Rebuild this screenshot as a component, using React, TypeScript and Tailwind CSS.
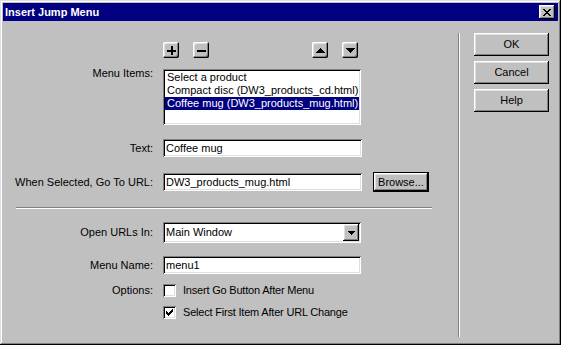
import React from "react";

const raised =
  "shadow-[inset_-1px_-1px_0_#000,inset_1px_1px_0_#fff,inset_-2px_-2px_0_#808080,inset_2px_2px_0_#dfdfdf]";
const sunken =
  "shadow-[inset_1px_1px_0_#808080,inset_-1px_-1px_0_#fff,inset_2px_2px_0_#000,inset_-2px_-2px_0_#dfdfdf]";

function SmallBtn({ children, className = "" }: { children: React.ReactNode; className?: string }) {
  return (
    <div
      className={`w-[16px] h-[16px] bg-[#c0c0c0] rounded-[2px] flex items-center justify-center ${raised} ${className}`}
    >
      {children}
    </div>
  );
}

function Check({ checked }: { checked?: boolean }) {
  const px: [number, number][] = [
    [0, 2], [0, 3], [0, 4], [1, 3], [1, 4], [1, 5], [2, 4], [2, 5], [2, 6],
    [3, 3], [3, 4], [3, 5], [4, 2], [4, 3], [4, 4], [5, 1], [5, 2], [5, 3],
    [6, 0], [6, 1], [6, 2],
  ];
  return (
    <div className={`w-[13px] h-[13px] bg-white flex items-center justify-center ${sunken}`}>
      {checked && (
        <svg width="7" height="7" viewBox="0 0 7 7" shapeRendering="crispEdges">
          {px.map(([x, y], i) => (
            <rect key={i} x={x} y={y} width="1" height="1" fill="#000" />
          ))}
        </svg>
      )}
    </div>
  );
}

export default function App() {
  const font = { fontFamily: '"Liberation Sans", Arial, sans-serif' };
  return (
    <div
      style={font}
      className="w-[561px] h-[345px] bg-[#c0c0c0] p-[3px] flex flex-col text-[11px] leading-[13px] text-black shadow-[inset_-1px_-1px_0_#000,inset_1px_1px_0_#dfdfdf,inset_-2px_-2px_0_#808080,inset_2px_2px_0_#fff]"
    >
      {/* Title bar */}
      <div className="h-[18px] bg-[#000080] flex items-center justify-between pl-[2px] pr-[3px]">
        <span className="text-white font-bold text-[11px]">Insert Jump Menu</span>
        <div className={`w-[16px] h-[14px] bg-[#c0c0c0] flex items-center justify-center ${raised}`}>
          <svg width="8" height="7" viewBox="0 0 8 7" shapeRendering="crispEdges">
            <path d="M0 0h2v1h-2z M6 0h2v1h-2z M1 1h2v1h-2z M5 1h2v1h-2z M2 2h4v1h-4z M3 3h2v1h-2z M2 4h4v1h-4z M1 5h2v1h-2z M5 5h2v1h-2z M0 6h2v1h-2z M6 6h2v1h-2z" fill="#000" />
          </svg>
        </div>
      </div>

      {/* Body */}
      <div className="flex flex-1">
        {/* Left */}
        <div className="w-[455px] flex flex-col">
          {/* small buttons */}
          <div className="flex mt-[21px]">
            <SmallBtn className="ml-[160px]">
              <svg width="9" height="9" viewBox="0 0 9 9" shapeRendering="crispEdges">
                <path d="M3.5 0h2v9h-2z M0 3.5h9v2h-9z" fill="#000" />
              </svg>
            </SmallBtn>
            <SmallBtn className="ml-[14px]">
              <svg width="9" height="9" viewBox="0 0 9 9" shapeRendering="crispEdges">
                <path d="M0 3.5h9v2h-9z" fill="#000" />
              </svg>
            </SmallBtn>
            <SmallBtn className="ml-[103px]">
              <svg width="9" height="5" viewBox="0 0 9 5" shapeRendering="crispEdges">
                <path d="M4.5 0L9 5H0z" fill="#000" />
              </svg>
            </SmallBtn>
            <SmallBtn className="ml-[14px]">
              <svg width="9" height="5" viewBox="0 0 9 5" shapeRendering="crispEdges">
                <path d="M0 0h9L4.5 5z" fill="#000" />
              </svg>
            </SmallBtn>
          </div>

          {/* Menu items */}
          <div className="flex items-start mt-[11px]">
            <div className="w-[150px] text-right -mt-[2px]">Menu Items:</div>
            <div className={`ml-[10px] w-[198px] h-[56px] bg-white p-[2px] ${sunken}`}>
              <div className="pl-[2px] h-[13px] whitespace-nowrap">Select a product</div>
              <div className="pl-[2px] h-[13px] whitespace-nowrap">Compact disc (DW3_products_cd.html)</div>
              <div className="pl-[2px] h-[13px] whitespace-nowrap bg-[#000080] text-white">
                Coffee mug (DW3_products_mug.html)
              </div>
            </div>
          </div>

          {/* Text */}
          <div className="flex items-center mt-[14px]">
            <div className="w-[150px] text-right">Text:</div>
            <div className={`ml-[10px] w-[199px] h-[18px] bg-white pl-[3px] flex items-center ${sunken}`}>
              Coffee mug
            </div>
          </div>

          {/* URL */}
          <div className="flex items-center mt-[15px] h-[20px]">
            <div className="w-[150px] text-right">When Selected, Go To URL:</div>
            <div className={`ml-[10px] w-[199px] h-[18px] bg-white pl-[3px] flex items-center ${sunken}`}>
              DW3_products_mug.html
            </div>
            <div className="ml-[11px] w-[56px] h-[20px] border border-black">
              <div className={`w-full h-full flex items-center justify-center ${raised}`}>Browse...</div>
            </div>
          </div>

          {/* separator */}
          <div className="mt-[15px] ml-[13px] w-[416px] h-[2px] border-t border-[#808080] border-b-white border-b" />

          {/* Open URLs In */}
          <div className="flex items-center mt-[13px]">
            <div className="w-[150px] text-right">Open URLs In:</div>
            <div className={`ml-[10px] w-[198px] h-[21px] bg-white p-[2px] flex items-center ${sunken}`}>
              <span className="flex-1 pl-[1px]">Main Window</span>
              <div className={`w-[16px] h-[17px] bg-[#c0c0c0] flex items-center justify-center ${raised}`}>
                <svg width="7" height="4" viewBox="0 0 7 4" shapeRendering="crispEdges">
                  <path d="M0 0h7v1h-7z M1 1h5v1h-5z M2 2h3v1h-3z M3 3h1v1h-1z" fill="#000" />
                </svg>
              </div>
            </div>
          </div>

          {/* Menu Name */}
          <div className="flex items-center mt-[13px]">
            <div className="w-[150px] text-right">Menu Name:</div>
            <div className={`ml-[10px] w-[198px] h-[18px] bg-white pl-[3px] flex items-center ${sunken}`}>
              menu1
            </div>
          </div>

          {/* Options */}
          <div className="flex items-center mt-[10px] h-[13px]">
            <div className="w-[150px] text-right">Options:</div>
            <div className="ml-[10px]">
              <Check />
            </div>
            <span className="ml-[7px] tracking-[-0.2px]">Insert Go Button After Menu</span>
          </div>
          <div className="flex items-center mt-[9px] h-[13px]">
            <div className="ml-[160px]">
              <Check checked />
            </div>
            <span className="ml-[7px] tracking-[-0.2px]">Select First Item After URL Change</span>
          </div>
        </div>

        {/* vertical separator */}
        <div className="mt-[12px] w-[2px] h-[304px] border-l border-[#808080] border-r border-r-white" />

        {/* Right */}
        <div className="pl-[14px] flex flex-col">
          <div className={`mt-[12px] w-[75px] h-[23px] flex items-center justify-center ${raised}`}>OK</div>
          <div className={`mt-[5px] w-[75px] h-[23px] flex items-center justify-center ${raised}`}>Cancel</div>
          <div className={`mt-[5px] w-[75px] h-[23px] flex items-center justify-center ${raised}`}>Help</div>
        </div>
      </div>
    </div>
  );
}
